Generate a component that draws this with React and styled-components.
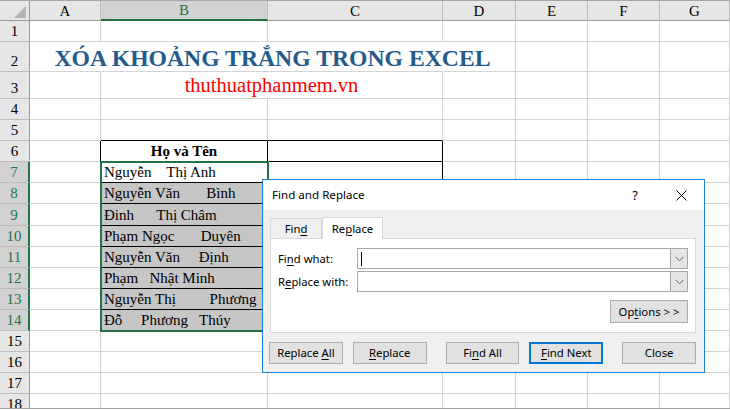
import React from 'react';
import styled, { createGlobalStyle, css } from 'styled-components';

const GREEN = '#217346';
const GRID = '#d4d4d4';
const INK = '#000';

const GlobalStyle = createGlobalStyle`
  html, body {
    margin: 0;
    padding: 0;
    background: #fff;
    overflow: hidden;
  }
`;

const Sheet = styled.div`
  position: relative;
  width: 730px;
  height: 409px;
  box-sizing: border-box;
  border-top: 1px solid #a6a6a6;
  border-bottom: 1px solid #a0a0a0;
  overflow: hidden;
  background: #fff;
`;

const Grid = styled.div`
  display: grid;
  grid-template-columns: 30px 71px 167px 175px 73px 72px 72px 70px;
  grid-template-rows: 20px 21px 30px 27px repeat(15, 21.1px);
`;

const HeadCell = styled.div`
  box-sizing: border-box;
  display: flex;
  align-items: center;
  justify-content: center;
  background: ${p => (p.$active ? '#d2d2d2' : '#e6e6e6')};
  color: ${p => (p.$active ? GREEN : '#000')};
  border-right: 1px solid #bcbcbc;
  border-bottom: ${p => (p.$active ? `2px solid ${GREEN}` : '1px solid #9b9b9b')};
  font-family: "Liberation Serif", serif;
  font-size: 15px;
  padding-top: 1px;
`;

const Corner = styled(HeadCell)`
  align-items: flex-end;
  justify-content: flex-end;
  padding: 0 3px 2px 0;
  border-right-color: #9b9b9b;
`;

const RowHead = styled.div`
  box-sizing: border-box;
  display: flex;
  align-items: flex-end;
  justify-content: center;
  padding-bottom: 2px;
  background: ${p => (p.$active ? '#d2d2d2' : '#e6e6e6')};
  color: ${p => (p.$active ? GREEN : '#000')};
  border-bottom: 1px solid #bcbcbc;
  border-right: ${p => (p.$active ? `2px solid ${GREEN}` : '1px solid #9b9b9b')};
  font-family: "Liberation Serif", serif;
  font-size: 15px;
  line-height: 16px;
`;

const Cell = styled.div`
  position: ${p => (p.$sel ? 'relative' : 'static')};
  box-sizing: border-box;
  min-width: 0;
  grid-column: span ${p => p.$span || 1};
  display: flex;
  align-items: flex-end;
  justify-content: ${p => (p.$center ? 'center' : 'flex-start')};
  padding: 0 3px 1px;
  background: ${p => p.$fill || '#fff'};
  border-right: 1px solid ${p => p.$right || GRID};
  border-bottom: 1px solid ${p => p.$bottom || GRID};
  font-family: "Liberation Serif", serif;
  font-size: 15px;
  font-weight: ${p => (p.$bold ? 700 : 400)};
  line-height: 17px;
  white-space: pre;

  ${p => p.$sel && css`
    &::after {
      content: '';
      position: absolute;
      left: -1px;
      right: -2px;
      top: ${p.$sel === 'first' ? '-1px' : '0'};
      bottom: ${p.$sel === 'last' ? '-2px' : '-1px'};
      border: 2px solid ${GREEN};
      border-top-width: ${p.$sel === 'first' ? '2px' : '0'};
      border-bottom-width: ${p.$sel === 'last' ? '2px' : '0'};
      pointer-events: none;
      z-index: 1;
    }
  `}
`;

const Title = styled.span`
  font-size: 23.7px;
  font-weight: 700;
  line-height: 24px;
  color: #245b8c;
`;

const Subtitle = styled.span`
  font-size: 20.5px;
  line-height: 22px;
  color: #ff0000;
  padding-bottom: 1px;
`;

/* ---------- dialog ---------- */

const Dialog = styled.div`
  position: absolute;
  left: 262px;
  top: 178px;
  width: 443px;
  height: 194px;
  box-sizing: border-box;
  border: 1px solid #1883d7;
  background: #f0f0f0;
  font-family: "Noto Sans", "Open Sans", sans-serif;
  font-size: 11.3px;
  color: #000;
  display: flex;
  flex-direction: column;
  z-index: 5;
`;

const TitleBar = styled.div`
  height: 30px;
  flex-shrink: 0;
  background: #fff;
  display: flex;
  align-items: center;
  padding-left: 9px;
`;

const TitleText = styled.div`
  flex: 1;
  font-size: 11.6px;
  padding-bottom: 1px;
`;

const CaptionButton = styled.div`
  width: 46px;
  height: 30px;
  display: flex;
  align-items: center;
  justify-content: center;
  font-size: 13px;
`;

const Body = styled.div`
  padding: 7px 8px 0 7px;
  display: flex;
  flex-direction: column;
`;

const TabRow = styled.div`
  display: flex;
  align-items: flex-end;
  height: 21px;
`;

const Tab = styled.div`
  position: relative;
  box-sizing: border-box;
  width: ${p => p.$w}px;
  height: ${p => (p.$active ? 22 : 20)}px;
  margin-bottom: ${p => (p.$active ? -1 : 0)}px;
  background: ${p => (p.$active ? '#fff' : '#f0f0f0')};
  border: 1px solid #d9d9d9;
  border-bottom: none;
  display: flex;
  align-items: center;
  justify-content: center;
  padding-bottom: 1px;
  z-index: ${p => (p.$active ? 1 : 0)};
`;

const Panel = styled.div`
  box-sizing: border-box;
  height: 95px;
  background: #fff;
  border: 1px solid #d9d9d9;
  padding: 9px 7px 0 7px;
  display: flex;
  flex-direction: column;
`;

const FieldRow = styled.div`
  display: flex;
  align-items: center;
  height: 21px;

  & + & {
    margin-top: 2px;
  }
`;

const Label = styled.div`
  width: 79px;
  flex-shrink: 0;
`;

const Combo = styled.div`
  box-sizing: border-box;
  width: 332px;
  height: 21px;
  border: 1px solid #a8a8a8;
  background: #fff;
  display: flex;
`;

const ComboField = styled.div`
  flex: 1;
  display: flex;
  align-items: center;
  padding-left: 3px;
`;

const Caret = styled.div`
  width: 1px;
  height: 14px;
  background: #000;
`;

const DropButton = styled.div`
  width: 16px;
  background: #e5e5e5;
  border-left: 1px solid #a8a8a8;
  display: flex;
  align-items: center;
  justify-content: center;
`;

const OptionsRow = styled.div`
  display: flex;
  justify-content: flex-end;
  margin-top: 8px;
`;

const Button = styled.div`
  box-sizing: border-box;
  width: ${p => p.$w || 74}px;
  height: ${p => p.$h || 22}px;
  margin-left: ${p => p.$gap || 0}px;
  background: #e1e1e1;
  border: ${p => (p.$primary ? '2px solid #0078d7' : '1px solid #adadad')};
  display: flex;
  align-items: center;
  justify-content: center;
  padding-bottom: 1px;
  white-space: pre;
`;

const ButtonRow = styled.div`
  display: flex;
  margin: 9px 0 0 -1px;
`;

const U = styled.span`
  text-decoration: underline;
  text-underline-offset: 2px;
`;

const Chevron = () => (
  <svg width="9" height="6" viewBox="0 0 9 6">
    <path d="M0.5 0.8 L4.5 4.8 L8.5 0.8" fill="none" stroke="#5c5c5c" strokeWidth="1" />
  </svg>
);

const CloseGlyph = () => (
  <svg width="11" height="11" viewBox="0 0 11 11">
    <path d="M0.5 0.5 L10.5 10.5 M10.5 0.5 L0.5 10.5" stroke="#000" strokeWidth="1" />
  </svg>
);

/* ---------- data ---------- */

const COLS = ['A', 'B', 'C', 'D', 'E', 'F', 'G'];
const NAMES = [
  'Nguyễn    Thị Anh',
  'Nguyễn Văn       Bình',
  'Đinh      Thị Châm',
  'Phạm Ngọc       Duyên',
  'Nguyễn Văn     Định',
  'Phạm   Nhật Minh',
  'Nguyễn Thị         Phương',
  'Đỗ     Phương   Thúy',
];

const inTable = r => r >= 6 && r <= 14;

const renderCells = r => {
  if (r === 2) {
    return [
      <Cell key="A2" $span={4} $center>
        <Title>XÓA KHOẢNG TRẮNG TRONG EXCEL</Title>
      </Cell>,
      ...['E', 'F', 'G'].map(c => <Cell key={c + r} />),
    ];
  }
  if (r === 3) {
    return [
      <Cell key="A3" />,
      <Cell key="B3" $span={2} $center>
        <Subtitle>thuthuatphanmem.vn</Subtitle>
      </Cell>,
      ...['D', 'E', 'F', 'G'].map(c => <Cell key={c + r} />),
    ];
  }
  return COLS.map(c => {
    const props = {};
    if (c === 'A' && inTable(r)) props.$right = INK;
    if ((c === 'B' || c === 'C') && r === 5) props.$bottom = INK;
    if ((c === 'B' || c === 'C') && inTable(r)) {
      props.$right = INK;
      props.$bottom = INK;
    }
    let text = null;
    if (c === 'B' && r === 6) {
      props.$bold = true;
      props.$center = true;
      text = 'Họ và Tên';
    }
    if (c === 'B' && r >= 7 && r <= 14) {
      text = NAMES[r - 7];
      props.$sel = r === 7 ? 'first' : r === 14 ? 'last' : 'mid';
      if (r > 7) props.$fill = '#c6c6c6';
    }
    return (
      <Cell key={c + r} {...props}>
        {text}
      </Cell>
    );
  });
};

const App = () => {
  const rows = Array.from({ length: 18 }, (_, i) => i + 1);
  return (
    <>
      <GlobalStyle />
      <Sheet>
        <Grid>
          <Corner>
            <svg width="12" height="12" viewBox="0 0 12 12">
              <polygon points="12,0 12,12 0,12" fill="#b4b4b4" />
            </svg>
          </Corner>
          {COLS.map(c => (
            <HeadCell key={c} $active={c === 'B'}>
              {c}
            </HeadCell>
          ))}
          {rows.map(r => (
            <React.Fragment key={r}>
              <RowHead $active={r >= 7 && r <= 14}>{r}</RowHead>
              {renderCells(r)}
            </React.Fragment>
          ))}
        </Grid>

        <Dialog>
          <TitleBar>
            <TitleText>Find and Replace</TitleText>
            <CaptionButton>?</CaptionButton>
            <CaptionButton>
              <CloseGlyph />
            </CaptionButton>
          </TitleBar>
          <Body>
            <TabRow>
              <Tab $w={52}>
                <span>Fin<U>d</U></span>
              </Tab>
              <Tab $w={61} $active>
                <span>Re<U>p</U>lace</span>
              </Tab>
            </TabRow>
            <Panel>
              <FieldRow>
                <Label>
                  Fi<U>n</U>d what:
                </Label>
                <Combo>
                  <ComboField>
                    <Caret />
                  </ComboField>
                  <DropButton>
                    <Chevron />
                  </DropButton>
                </Combo>
              </FieldRow>
              <FieldRow>
                <Label>
                  R<U>e</U>place with:
                </Label>
                <Combo>
                  <ComboField />
                  <DropButton>
                    <Chevron />
                  </DropButton>
                </Combo>
              </FieldRow>
              <OptionsRow>
                <Button $w={78} $h={23}>
                  <span>Op<U>t</U>ions &gt; &gt;</span>
                </Button>
              </OptionsRow>
            </Panel>
            <ButtonRow>
              <Button>
                <span>Replace <U>A</U>ll</span>
              </Button>
              <Button $gap={10}>
                <span><U>R</U>eplace</span>
              </Button>
              <Button $gap={19}>
                <span>Fi<U>n</U>d All</span>
              </Button>
              <Button $gap={10} $primary>
                <span><U>F</U>ind Next</span>
              </Button>
              <Button $gap={19}>
                <span>Close</span>
              </Button>
            </ButtonRow>
          </Body>
        </Dialog>
      </Sheet>
    </>
  );
};

export default App;
